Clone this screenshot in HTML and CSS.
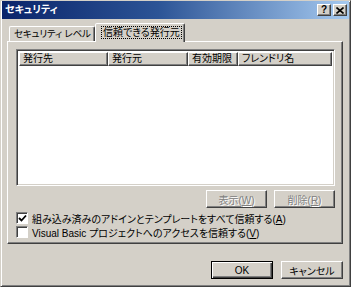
FILE: index.html
```html
<!DOCTYPE html>
<html lang="ja">
<head>
  <meta charset="UTF-8">
  <title>セキュリティ</title>
  <link rel="stylesheet" href="styles.css">
</head>
<body>
  <div class="window">
    <div class="titlebar">
      <span class="title">セキュリティ</span>
      <div class="caption-btns">
        <span class="cap-btn help">?</span>
        <span class="cap-btn">
          <svg width="8" height="7" viewBox="0 0 8 7"><path d="M0.5 0.5L7.5 6.5M7.5 0.5L0.5 6.5" stroke="#000" stroke-width="1.6"/></svg>
        </span>
      </div>
    </div>

    <div class="content">
      <div class="tabs">
        <div class="tab first">セキュリティ&nbsp;レベル</div>
        <div class="tab active"><span class="focus">信頼できる発行元</span></div>
      </div>

      <div class="panel">
        <div class="list">
          <div class="list-head">
            <div class="col c1">発行先</div>
            <div class="col c2">発行元</div>
            <div class="col c3">有効期限</div>
            <div class="col c4">フレンドリ名</div>
          </div>
        </div>

        <div class="list-btns">
          <button class="btn" disabled>表示(<u>W</u>)</button>
          <button class="btn" disabled>削除(<u>R</u>)</button>
        </div>

        <label class="check">
          <span class="box">
            <svg width="9" height="9" viewBox="0 0 9 9"><path d="M1 4L3.5 6.5L8 1.5" fill="none" stroke="#000" stroke-width="1.8"/></svg>
          </span>
          <span>組み込み済みのアドインとテンプレートをすべて信頼する(<u>A</u>)</span>
        </label>
        <label class="check">
          <span class="box"></span>
          <span>Visual Basic プロジェクトへのアクセスを信頼する(<u>V</u>)</span>
        </label>
      </div>

      <div class="dialog-btns">
        <button class="btn default">OK</button>
        <button class="btn">キャンセル</button>
      </div>
    </div>
  </div>
</body>
</html>
```

FILE: styles.css
```css
* {
  box-sizing: border-box;
}

body {
  margin: 0;
  font-family: "Liberation Sans", "Noto Sans CJK JP", sans-serif;
  font-size: 10px;
  font-feature-settings: "palt";
  color: #000;
}

u {
  text-underline-offset: 1px;
}

.window {
  width: 351px;
  height: 287px;
  background: #d4d0c8;
  border: 1px solid;
  border-color: #d4d0c8 #404040 #404040 #d4d0c8;
  box-shadow: inset 1px 1px #fff, inset -1px -1px #808080;
  padding: 0 2px 2px 2px;
  display: flex;
  flex-direction: column;
}

.titlebar {
  height: 18px;
  margin: 0 -1px;
  background: linear-gradient(to right, #0a246a, #2c5496 45%, #a6caf0);
  display: flex;
  align-items: center;
  justify-content: space-between;
  padding: 0 2px 0 3px;
}

.title {
  color: #fff;
  font-weight: bold;
  font-size: 10px;
  line-height: 18px;
}

.caption-btns {
  display: flex;
}

.cap-btn {
  width: 14px;
  height: 12px;
  background: #d4d0c8;
  border: 1px solid;
  border-color: #fff #404040 #404040 #fff;
  box-shadow: inset -1px -1px #808080;
  display: flex;
  align-items: center;
  justify-content: center;
  font-weight: bold;
  font-size: 10px;
  line-height: 10px;
}

.cap-btn.help {
  margin-right: 2px;
}

.content {
  flex: 1;
  padding: 4px 5px 0 4px;
  display: flex;
  flex-direction: column;
}

.tabs {
  display: flex;
  align-items: flex-end;
  height: 18px;
  position: relative;
  z-index: 1;
}

.tab {
  height: 15px;
  padding: 0 4px;
  border: 1px solid;
  border-bottom: none;
  border-color: #fff #404040 transparent #fff;
  box-shadow: inset -1px 0 #808080;
  border-radius: 2px 2px 0 0;
  line-height: 14px;
  white-space: nowrap;
  overflow: hidden;
}

.tab.first {
  width: 86px;
  margin-left: 2px;
  padding: 0 2px 0 4px;
  font-size: 9.5px;
  letter-spacing: -0.2px;
}

.tab.active {
  height: 19px;
  width: 90px;
  margin-bottom: -1px;
  background: #d4d0c8;
  padding: 2px 3px 0 5px;
}

.focus {
  display: inline-block;
  border: 1px dotted #000;
  padding: 0 1px;
  line-height: 11px;
}

.panel {
  height: 203px;
  border: 1px solid;
  border-color: #fff #404040 #404040 #fff;
  box-shadow: inset -1px -1px #808080;
  padding: 7px 7px 0 8px;
}

.list {
  height: 137px;
  background: #fff;
  border: 1px solid;
  border-color: #808080 #fff #fff #808080;
  box-shadow: inset 1px 1px #404040, inset -1px -1px #d4d0c8;
  padding: 2px;
}

.list-head {
  display: flex;
  height: 14px;
}

.col {
  background: #d4d0c8;
  border: 1px solid;
  border-color: #fff #404040 #404040 #fff;
  box-shadow: inset -1px -1px #808080;
  padding: 0 3px;
  line-height: 11px;
  white-space: nowrap;
}

.c1 { width: 89px; }
.c2 { width: 80px; }
.c3 { width: 50px; }
.c4 { flex: 1; }

.list-btns {
  display: flex;
  justify-content: flex-end;
  gap: 7px;
  margin-top: 4px;
}

.btn {
  width: 61px;
  height: 18px;
  background: #d4d0c8;
  border: 1px solid;
  border-color: #fff #404040 #404040 #fff;
  box-shadow: inset -1px -1px #808080;
  font: inherit;
  font-size: 10px;
  padding: 0;
  color: #000;
}

.btn:disabled {
  color: #808080;
  text-shadow: 1px 1px #fff;
}

.btn.default {
  border: 1px solid #000;
  box-shadow: inset 1px 1px #fff, inset -1px -1px #404040, inset -2px -2px #808080;
}

.check {
  display: flex;
  align-items: center;
  gap: 4px;
  height: 14px;
  white-space: nowrap;
}

.list-btns + .check {
  margin-top: 3px;
}

.box {
  width: 12px;
  height: 12px;
  background: #fff;
  border: 1px solid;
  border-color: #808080 #fff #fff #808080;
  box-shadow: inset 1px 1px #404040;
  display: flex;
  align-items: center;
  justify-content: center;
}

.dialog-btns {
  display: flex;
  justify-content: flex-end;
  gap: 8px;
  margin-top: 17px;
}

.dialog-btns .btn {
  width: 62px;
}
```
